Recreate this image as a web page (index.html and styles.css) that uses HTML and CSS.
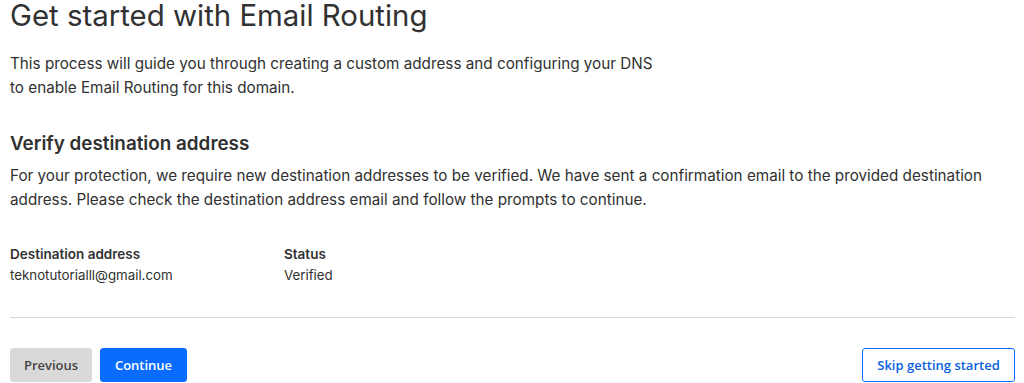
FILE: index.html
```html
<!DOCTYPE html>
<html>
<head>
<meta charset="utf-8">
<link rel="stylesheet" href="styles.css">
</head>
<body>
<main class="page">
  <h1 class="title">Get started with Email Routing</h1>
  <p class="intro">This process will guide you through creating a custom address and configuring your DNS<br>to enable Email Routing for this domain.</p>
  <h2 class="subtitle">Verify destination address</h2>
  <p class="desc">For your protection, we require new destination addresses to be verified. We have sent a confirmation email to the provided destination address. Please check the destination address email and follow the prompts to continue.</p>
  <div class="info">
    <div class="col col-addr">
      <div class="label">Destination address</div>
      <div class="value">teknotutorialll@gmail.com</div>
    </div>
    <div class="col">
      <div class="label">Status</div>
      <div class="value">Verified</div>
    </div>
  </div>
  <hr class="divider">
  <div class="actions">
    <div class="left">
      <button class="btn btn-grey">Previous</button>
      <button class="btn btn-blue">Continue</button>
    </div>
    <button class="btn btn-outline">Skip getting started</button>
  </div>
</main>
</body>
</html>
```

FILE: styles.css
```css
html, body {
  margin: 0;
  padding: 0;
  background: #ffffff;
}
body {
  font-family: Inter, "Noto Sans", sans-serif;
  color: #313131;
}
.page {
  padding: 0 9px 0 10px;
}
.title {
  margin: -2px 0 0;
  font-size: 29.4px;
  font-weight: 400;
  line-height: 36px;
  color: #313131;
}
.intro {
  margin: 18px 0 0;
  font-size: 15.25px;
  line-height: 24px;
  color: #313131;
}
.subtitle {
  margin: 30px 0 0;
  font-size: 18.85px;
  font-weight: 600;
  line-height: 28px;
  color: #313131;
}
.desc {
  margin: 6px 0 0;
  font-size: 15.25px;
  line-height: 24px;
  color: #313131;
}
.info {
  display: flex;
  margin-top: 32px;
}
.col-addr {
  width: 274px;
}
.label {
  font-size: 13.5px;
  font-weight: 600;
  line-height: 20px;
}
.value {
  margin-top: 1px;
  font-size: 13.3px;
  line-height: 20px;
}
.divider {
  margin: 32px 0 0;
  border: 0;
  border-top: 1px solid #d9d9d9;
}
.actions {
  display: flex;
  justify-content: space-between;
  margin-top: 30px;
}
.left {
  display: flex;
  gap: 8px;
}
.btn {
  font-family: "Open Sans", "Noto Sans", sans-serif;
  font-size: 13px;
  font-weight: 600;
  height: 34px;
  padding: 0;
  border-radius: 3px;
  border: 1px solid transparent;
}
.btn-grey {
  width: 82px;
  background: #d9d9d9;
  color: #444444;
  border-color: #d9d9d9;
}
.btn-blue {
  width: 87px;
  background: #0a6cff;
  color: #ffffff;
  border-color: #0a6cff;
}
.btn-outline {
  width: 153px;
  background: #ffffff;
  color: #0a5fe0;
  border-color: #0a6cff;
}
```
